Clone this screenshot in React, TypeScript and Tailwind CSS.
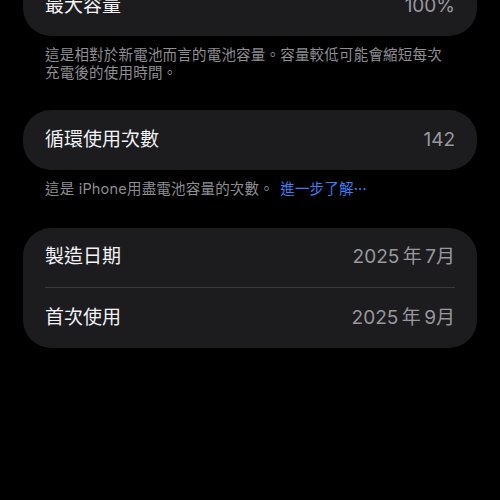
export default function App() {
  const font = { fontFamily: '"Inter", "Noto Sans CJK TC", sans-serif' };
  return (
    <div className="w-[500px] h-[500px] bg-black overflow-hidden px-[23px]" style={font}>
      {/* Maximum capacity */}
      <div className="mt-[-24px] bg-[#1c1c1e] rounded-[28px] h-[60px] flex items-center justify-between px-[22px]">
        <span className="text-[19px] text-[#f2f2f7]">最大容量</span>
        <span className="text-[19px] text-[#98989d]">100%</span>
      </div>
      <p className="px-[22px] pt-[10px] pb-[28px] text-[14.5px] leading-[18px] tracking-[0.2px] text-[#8e8e93]">
        這是相對於新電池而言的電池容量。容量較低可能會縮短每次充電後的使用時間。
      </p>

      {/* Cycle count */}
      <div className="bg-[#1c1c1e] rounded-[28px] h-[60px] flex items-center justify-between px-[22px]">
        <span className="text-[19px] text-[#f2f2f7]">循環使用次數</span>
        <span className="text-[19px] text-[#98989d]">142</span>
      </div>
      <p className="px-[22px] pt-[10px] pb-[30px] text-[14.5px] leading-[18px] tracking-[0.2px] text-[#8e8e93]">
        這是 iPhone用盡電池容量的次數。 <span className="ml-[2px] text-[#3a7ff0]">進一步了解···</span>
      </p>

      {/* Dates */}
      <div className="bg-[#1c1c1e] rounded-[28px] px-[22px]">
        <div className="h-[60px] flex items-center justify-between border-b border-[#38383a]">
          <span className="text-[19px] text-[#f2f2f7]">製造日期</span>
          <span className="text-[19px] text-[#98989d]">2025{'\u2009'}年{'\u2009'}7月</span>
        </div>
        <div className="h-[60px] flex items-center justify-between">
          <span className="text-[19px] text-[#f2f2f7]">首次使用</span>
          <span className="text-[19px] text-[#98989d]">2025{'\u2009'}年{'\u2009'}9月</span>
        </div>
      </div>
    </div>
  );
}
